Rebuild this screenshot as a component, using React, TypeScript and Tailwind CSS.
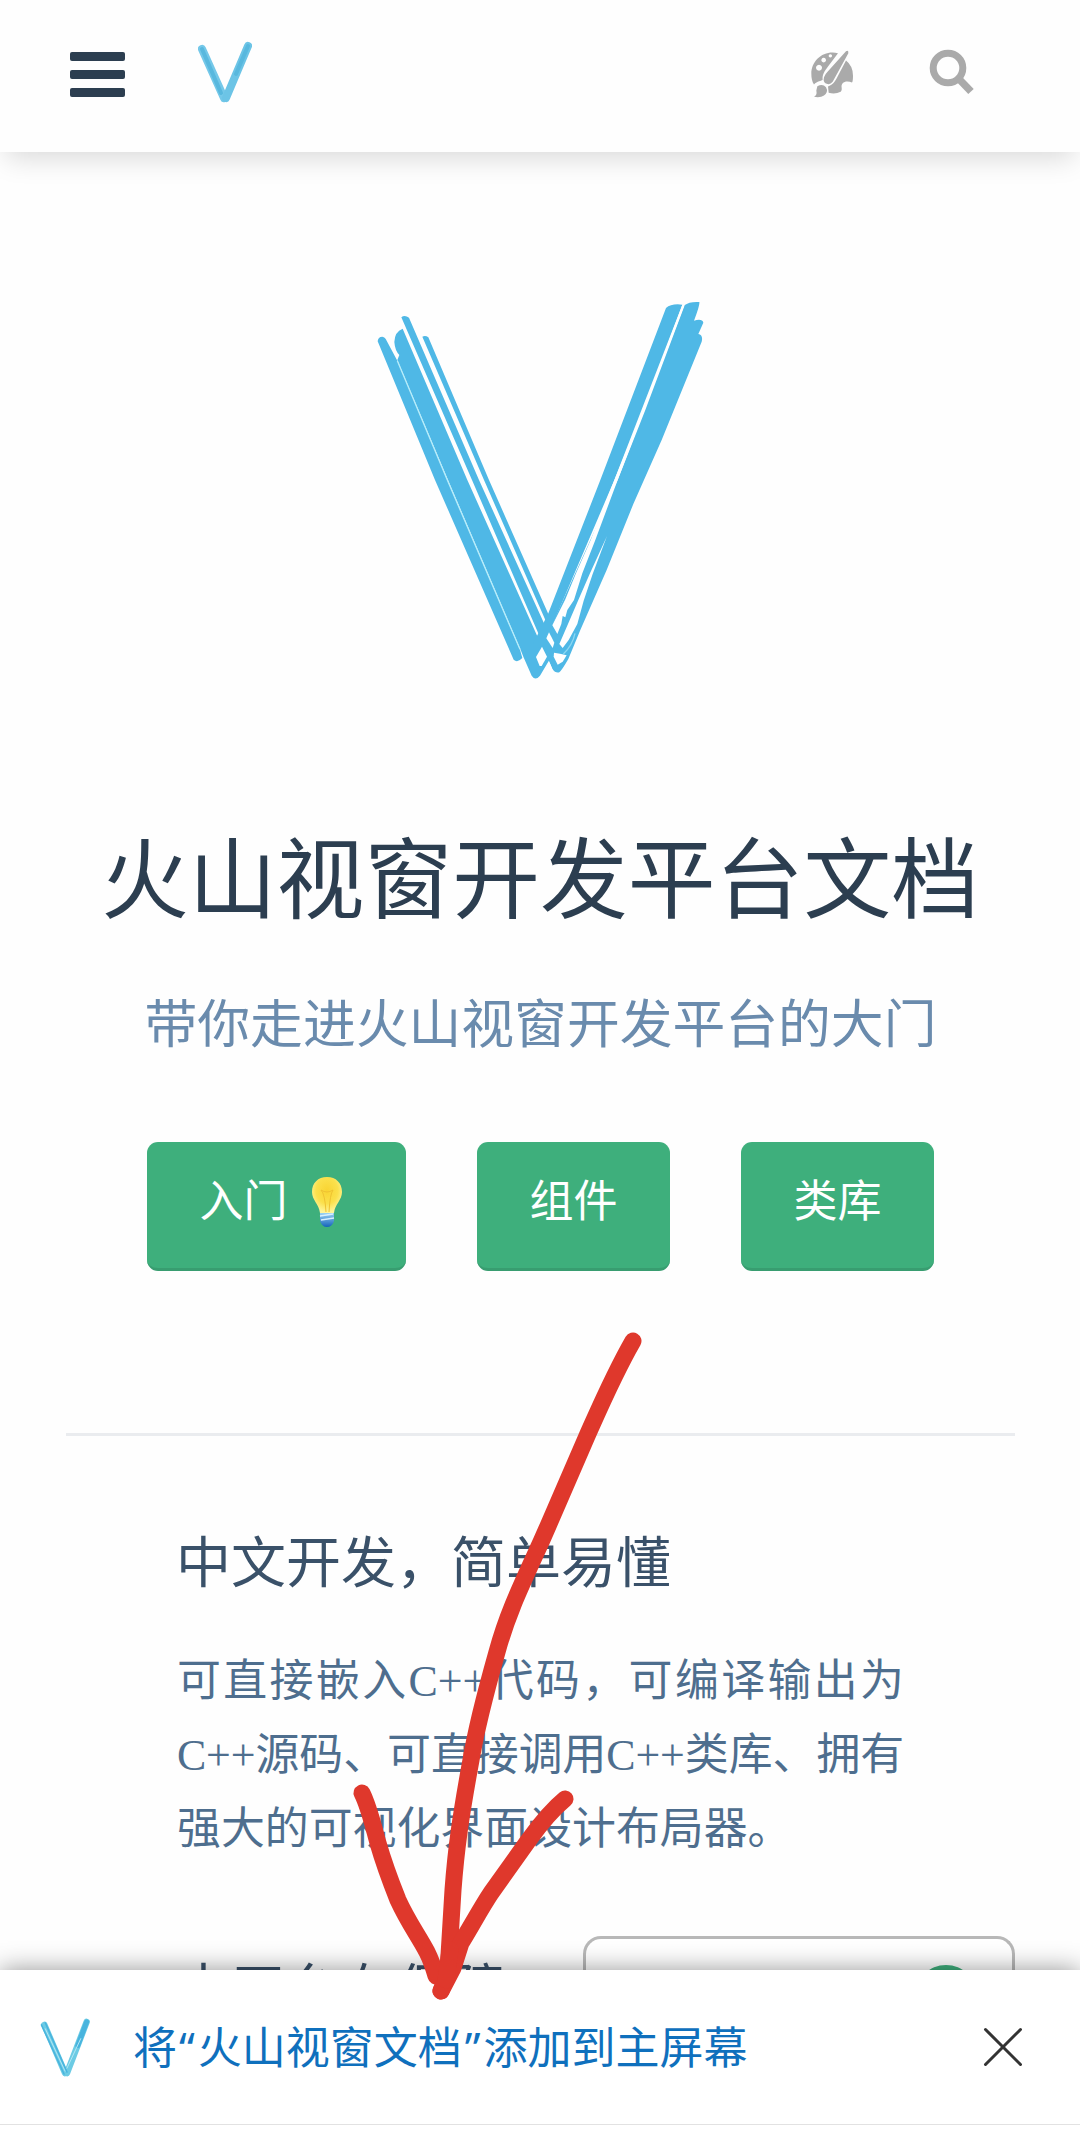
const INK = '#4fb8e6';

function VLogo({ className }: { className: string }) {
  return (
    <svg viewBox="0 0 1080 1260" className={className} aria-label="V">
      <g fill={INK}>
        <path d="M53 184Q54 170 67 170Q76 171 80 182L112 242L262 600L480 1109L487 1134Q472 1150 461 1139L225 600Z" />
        <path d="M128 146Q104 155 103 186Q105 212 118 225L112 240L264 600L483 1112L490 1130L515 1187Q526 1204 540 1187L568 1140L600 1060L536 1078L322 600Z" />
        <path d="M124 112Q134 104 147 113L190 213L357 600L552 1030L575 1100L540 1072L336 600Z" />
        <path d="M187 170Q196 165 205 172L387 600L565 1002L575 1050L556 1020L372 600Z" />
        <path d="M918 84Q934 70 967 74L763 600L577 1036L545 1110L520 1090L565 1000L721 600Z" />
        <path d="M973 76Q988 64 1018 66Q1020 75 1002 122Q1027 115 1030 128L1015 162Q1030 165 1025 185L905 480L820 672L740 870L661 1050L625 1137Q606 1170 598 1177Q586 1180 577 1167L545 1090L575 1036L773 600Z" />
      </g>
      <g fill="#fff">
        <path d="M967 74L974 76L856 390L773 600L706 780L667 880L642 960L622 990L616 1012L608 1008L604 1032L592 1062L577 1036L615 960L648 880L692 780L763 600L849 390Z" />
        <path d="M741 768L698 882L671 962L652 1032L626 1080L608 1104L598 1092L624 1032L655 960L690 880Z" />
        <path d="M546 1100L561 1130L545 1158L539 1158L528 1131Z" />
        <path d="M567 1057L583 1088L578 1104L559 1075Z" />
        <path d="M582 1118L600 1121L620 1126L608 1145L593 1154L581 1130Z" />
        <path d="M568 1146L580 1174L560 1174Z" />
      </g>
      <path d="M610 1122Q638 1095 645 1060" fill="none" stroke="#8bd7f2" strokeWidth="4" />
      <path d="M112 242L262 600L480 1108" fill="none" stroke="#b5ecfa" strokeWidth="4" />
    </svg>
  );
}

function MiniLogo({ className }: { className: string }) {
  return (
    <svg viewBox="0 0 54 64" className={className} fill="none" strokeLinecap="round" aria-label="V">
      <path d="M4 10L26 59" stroke="#74c8e9" strokeWidth="8" />
      <path d="M50 7L28 59" stroke="#6cc4e6" strokeWidth="8" />
      <path d="M4 10L23 54M50 7L38 35" stroke="#58b8de" strokeWidth="4" />
    </svg>
  );
}

function SketchLogo({ className }: { className: string }) {
  return (
    <svg viewBox="0 0 54 62" className={className} fill="none" strokeLinecap="round" aria-label="V">
      <path d="M5 8L26 57M48 5L28 57" stroke="#6ccbe4" strokeWidth="6.5" />
      <path d="M2 8L25 58M6 6L28 56" stroke="#48b4de" strokeWidth="1.5" />
      <path d="M48 5L39 29" stroke="#48b4de" strokeWidth="5" />
      <path d="M42 22L28 52M6 12L26 55" stroke="#b4e8f4" strokeWidth="1" />
    </svg>
  );
}

function PaletteIcon() {
  return (
    <svg viewBox="0 0 132 146" className="h-[49px] w-[44px]">
      <path
        fill="#aaa"
        fillRule="evenodd"
        d="M84 12C40 2 4 34 4 74C4 86 6 98 12 106C22 96 34 96 38 92C36 76 44 66 54 52ZM27 47a9 9 0 1 0 .1 0ZM41 26a7 7 0 1 0 .1 0ZM61 15a5 5 0 1 0 .1 0Z"
      />
      <path fill="#aaa" d="M108 34Q129 50 129 80Q129 98 126 100C116 96 104 96 98 102C90 112 100 118 92 128Q76 136 56 131L54 112C72 106 78 92 84 80Z" />
      <path fill="#aaa" d="M108 6Q116 2 115 12L68 98Q60 108 50 104Q38 100 42 84Q44 76 54 66Z" />
      <path fill="#aaa" d="M22 111Q38 102 48 114Q56 128 42 139Q32 146 12 143Q22 138 19 124Z" />
    </svg>
  );
}

function SearchIcon() {
  return (
    <svg viewBox="0 0 46 46" className="size-[46px]" fill="none" stroke="#aaa">
      <circle cx="19" cy="19" r="14.8" strokeWidth="7" />
      <path d="M29.5 29.5L42 42.5" strokeWidth="7.5" />
    </svg>
  );
}

function Bulb() {
  return (
    <svg viewBox="0 0 30 50" className="h-[50px] w-[30px]">
      <defs>
        <radialGradient id="glass" cx="50%" cy="38%" r="60%">
          <stop offset="0" stopColor="#f9d432" />
          <stop offset=".6" stopColor="#fbe04c" />
          <stop offset="1" stopColor="#fff59b" />
        </radialGradient>
        <linearGradient id="cap" x2="0" y2="1">
          <stop offset="0" stopColor="#9bd3f4" />
          <stop offset="1" stopColor="#1463bb" />
        </linearGradient>
      </defs>
      <path d="M15 0C6 0 0 6 0 15C0 23 7 27 8 36H22C23 27 30 23 30 15C30 6 24 0 15 0Z" fill="url(#glass)" />
      <path d="M9 13Q13 17 14 35M21 13Q18 17 17 35M9 13Q15 17 21 13" fill="none" stroke="#efc232" strokeWidth="1" />
      <path d="M8 36H22V44Q20 50 15 50Q10 50 8 44Z" fill="url(#cap)" />
      <path d="M8 39L21 37M9 43L22 41" stroke="#d7efff" strokeWidth="1.4" />
    </svg>
  );
}

function Arrow() {
  return (
    <svg
      viewBox="0 0 1080 2130"
      className="pointer-events-none absolute inset-0 z-20 h-full w-full"
      fill="none"
      stroke="#df382c"
      strokeWidth="17"
      strokeLinecap="round"
      strokeLinejoin="round"
    >
      <path d="M633 1341C614 1374 600 1407 587 1436C570 1475 556 1508 541 1542C520 1588 507 1615 497 1652C484 1698 476 1730 471 1760C460 1820 456 1850 453 1890C450 1940 449 1955 448 1972L441 1991" />
      <path d="M362 1793C369 1807 373 1825 378 1843C384 1864 390 1880 398 1900C408 1922 418 1935 427 1952Q432 1962 436 1976" />
      <path d="M565 1799C548 1813 536 1830 528 1841L491 1893C481 1908 472 1925 461 1943L453 1968L441 1991" />
      <path d="M450 1950L446 1980" />
    </svg>
  );
}

const buttons = [
  { label: '入门', width: 'w-[259px]', bulb: true },
  { label: '组件', width: 'w-[193px]', bulb: false },
  { label: '类库', width: 'w-[193px]', bulb: false },
];

export default function App() {
  return (
    <div className="relative flex h-[2130px] w-[1080px] flex-col overflow-hidden bg-[#fefefe] font-['Noto_Sans_CJK_SC',sans-serif] text-[#2c3e50]">
      <header className="relative z-10 flex h-[152px] shrink-0 items-start bg-[#fefefe] pl-[70px] shadow-[0_12px_26px_-6px_rgba(0,0,0,0.15)]">
        <div className="mt-[52px] flex w-[55px] flex-col gap-[9px]">
          <span className="h-[9px] rounded-[2px] bg-[#2c3e50]" />
          <span className="h-[9px] rounded-[2px] bg-[#2c3e50]" />
          <span className="h-[9px] rounded-[2px] bg-[#2c3e50]" />
        </div>
        <MiniLogo className="mt-[39px] ml-[73px] h-[64px] w-[54px]" />
        <div className="mt-[49px] ml-auto flex gap-[75px] pr-[105px]">
          <PaletteIcon />
          <SearchIcon />
        </div>
      </header>

      <main className="flex min-h-0 flex-1 flex-col overflow-hidden">
        <VLogo className="mx-auto mt-[128px] h-[420px] w-[360px] shrink-0" />
        <h1 className="mt-[107px] shrink-0 text-center text-[87.8px] leading-[132px] whitespace-nowrap">火山视窗开发平台文档</h1>
        <p className="mt-[42px] shrink-0 pl-px text-center text-[52.8px] leading-[78px] whitespace-nowrap text-[#6a8bad]">
          带你走进火山视窗开发平台的大门
        </p>
        <div className="mt-[83px] flex shrink-0 gap-[71px] pl-[147px]">
          {buttons.map((b) => (
            <button
              key={b.label}
              className={`${b.width} flex h-[129px] items-center justify-center rounded-[11px] border-b-[3px] border-[#389d70] bg-[#3eaf7c] pb-[15px] text-[44px] leading-none text-white`}
            >
              {b.label}
              {b.bulb && (
                <span className="mt-[8px] mr-[12px] ml-[24px]">
                  <Bulb />
                </span>
              )}
            </button>
          ))}
        </div>
        <hr className="mt-[162px] mr-[65px] ml-[66px] h-[3px] shrink-0 border-0 bg-[#eaecef]" />

        <section className="mx-[176px] mt-[84px] shrink-0">
          <h2 className="text-[55px] leading-[76px] text-[#3a5169]">中文开发，简单易懂</h2>
          <p className="mt-[48px] ml-px font-['Liberation_Serif','Noto_Sans_CJK_SC',serif] text-[43.9px] leading-[74px] whitespace-nowrap text-[#4e6e8e]">
            <span className="block [text-align-last:justify]">可直接嵌入C++代码，可编译输出为</span>
            <span className="block tracking-[-0.15px] [text-align-last:justify]">C++源码、可直接调用C++类库、拥有</span>
            <span className="block">强大的可视化界面设计布局器。</span>
          </p>
        </section>
        <div className="mt-[70px] flex shrink-0 items-start pl-[176px]">
          <h2 className="mt-[11px] w-[407px] text-[55px] leading-[76px] text-[#3a5169]">本平台有保障</h2>
          <div className="flex h-[120px] w-[432px] justify-end rounded-t-[18px] border-[3px] border-b-0 border-[#b8b8b8] bg-white pr-[35px]">
            <span className="mt-[26px] size-[62px] rounded-full bg-[#3eaf7c]" />
          </div>
        </div>
      </main>

      <footer className="relative z-10 flex h-[160px] shrink-0 items-start bg-white pl-[39px] shadow-[0_0_24px_rgba(0,0,0,0.42)]">
        <SketchLogo className="mt-[47px] h-[61px] w-[54px]" />
        <span className="mt-[45px] ml-[40px] font-['Noto_Sans','Noto_Sans_CJK_SC',sans-serif] text-[44px] leading-[64px] whitespace-nowrap text-[#0f70bd]">
          将<span className="mr-[3px] ml-[2px]">“</span>火山视窗文档<span className="mr-[3px] ml-[3px]">”</span>添加到主屏幕
        </span>
        <svg viewBox="0 0 40 40" className="mt-[57px] mr-[57px] ml-auto size-10" stroke="#333" strokeWidth="3" strokeLinecap="round">
          <path d="M2.5 2.5L37.5 37.5M37.5 2.5L2.5 37.5" />
        </svg>
        <span className="absolute inset-x-0 bottom-[5px] h-px bg-[#e2e2e2]" />
      </footer>
      <Arrow />
    </div>
  );
}
